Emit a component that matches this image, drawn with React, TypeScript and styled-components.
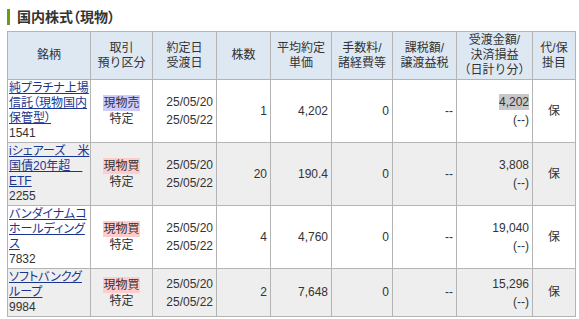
import styled, { createGlobalStyle } from "styled-components";

type Holding = {
    name: string[];
    code: string;
    side: "buy" | "sell";
    account: string;
    tradeDate: string;
    settleDate: string;
    qty: string;
    price: string;
    fee: string;
    tax: string;
    amount: string;
    amountMarked?: boolean;
    pl: string;
    margin: string;
};

const holdings: Holding[] = [
    {
        name: ["純プラチナ上場", "信託（現物国内", "保管型）"], code: "1541", side: "sell", account: "特定",
        tradeDate: "25/05/20", settleDate: "25/05/22", qty: "1", price: "4,202", fee: "0", tax: "--",
        amount: "4,202", amountMarked: true, pl: "(--)", margin: "保"
    },
    {
        name: ["iシェアーズ　米", "国債20年超　", "ETF"], code: "2255", side: "buy", account: "特定",
        tradeDate: "25/05/20", settleDate: "25/05/22", qty: "20", price: "190.4", fee: "0", tax: "--",
        amount: "3,808", pl: "(--)", margin: "保"
    },
    {
        name: ["バンダイナムコ", "ホールディング", "ス"], code: "7832", side: "buy", account: "特定",
        tradeDate: "25/05/20", settleDate: "25/05/22", qty: "4", price: "4,760", fee: "0", tax: "--",
        amount: "19,040", pl: "(--)", margin: "保"
    },
    {
        name: ["ソフトバンクグ", "ループ"], code: "9984", side: "buy", account: "特定",
        tradeDate: "25/05/20", settleDate: "25/05/22", qty: "2", price: "7,648", fee: "0", tax: "--",
        amount: "15,296", pl: "(--)", margin: "保"
    },
];

const colWidths = [83, 62, 64, 54, 61, 61, 64, 76, 43];

const GlobalStyle = createGlobalStyle`
    body {
        margin: 0;
        background: #ffffff;
        color: #333333;
        font-family: "Liberation Sans", Arial, "Noto Sans CJK JP", sans-serif;
        font-size: 12px;
    }
`;

export default function App() {
    return <Page>
        <GlobalStyle/>
        <Title>国内株式（現物）</Title>
        <Table>
            <colgroup>
                {colWidths.map((w, idx) => <col key={idx} style={{width: w}}/>)}
            </colgroup>
            <thead>
            <tr>
                <Th>銘柄</Th>
                <Th>取引<br/>預り区分</Th>
                <Th>約定日<br/>受渡日</Th>
                <Th>株数</Th>
                <Th>平均約定<br/>単価</Th>
                <Th>手数料/<br/>諸経費等</Th>
                <Th>課税額/<br/>譲渡益税</Th>
                <Th>受渡金額/<br/>決済損益<br/>（日計り分）</Th>
                <Th>代/保<br/>掛目</Th>
            </tr>
            </thead>
            <tbody>
            {holdings.map((h, idx) => <Row key={h.code} $alt={idx % 2 === 1}>
                <NameCell>
                    <StockLink href="#">{h.name.map((line, i) => <span key={i}>{line}{i < h.name.length - 1 && <br/>}</span>)}</StockLink>
                    <br/>{h.code}
                </NameCell>
                <SideCell>
                    <SideTag $side={h.side}>{h.side === "buy" ? "現物買" : "現物売"}</SideTag>
                    <br/>{h.account}
                </SideCell>
                <TwoLineCell $align="right">{h.tradeDate}<br/>{h.settleDate}</TwoLineCell>
                <Td $align="right">{h.qty}</Td>
                <Td $align="right">{h.price}</Td>
                <Td $align="right">{h.fee}</Td>
                <Td $align="right">{h.tax}</Td>
                <TwoLineCell $align="right">
                    <Amount $marked={!!h.amountMarked}>{h.amount}</Amount><br/>{h.pl}
                </TwoLineCell>
                <Td $align="center">{h.margin}</Td>
            </Row>)}
            </tbody>
        </Table>
    </Page>
}

const Page = styled.div`
    padding: 9px 4px 0 7px;
`;

const Title = styled.h2`
    margin: 0 0 6px 0;
    padding-left: 7px;
    border-left: 3px solid #6e9a1c;
    font-size: 14px;
    line-height: 16px;
    font-weight: bold;
    color: #333333;
    font-feature-settings: "palt";
`;

const Table = styled.table`
    width: 569px;
    table-layout: fixed;
    border-collapse: collapse;
    border: 1px solid #b4b4b4;
`;

const Th = styled.th`
    background-color: #dde8f3;
    border: 1px solid #b4b4b4;
    padding: 1px 1px;
    font-weight: normal;
    font-size: 12px;
    line-height: 15px;
    color: #333333;
    text-align: center;
    vertical-align: middle;
    white-space: nowrap;
`;

const Row = styled.tr<{ $alt: boolean }>`
    background-color: ${p => p.$alt ? "#eeeeee" : "#ffffff"};
`;

const Td = styled.td<{ $align: "left" | "center" | "right" }>`
    border: 1px solid #b4b4b4;
    padding: 1px 3px;
    line-height: 15px;
    text-align: ${p => p.$align};
    vertical-align: middle;
    white-space: nowrap;
`;

const TwoLineCell = styled(Td)`
    line-height: 18px;
`;

const NameCell = styled.td`
    border: 1px solid #b4b4b4;
    padding: 1px 0 1px 1px;
    line-height: 15px;
    text-align: left;
    vertical-align: middle;
    white-space: nowrap;
    overflow: hidden;
    font-feature-settings: "palt";
`;

const StockLink = styled.a`
    color: #1a3590;
    text-decoration: underline;
`;

const SideCell = styled.td`
    border: 1px solid #b4b4b4;
    padding: 1px 0;
    line-height: 16px;
    text-align: center;
    vertical-align: middle;
`;

const SideTag = styled.span<{ $side: "buy" | "sell" }>`
    background-color: ${p => p.$side === "buy" ? "#ffcccc" : "#ccccff"};
    padding: 1px 0;
`;

const Amount = styled.span<{ $marked: boolean }>`
    background-color: ${p => p.$marked ? "#c8c8c8" : "transparent"};
    padding: 1px 0;
`;
